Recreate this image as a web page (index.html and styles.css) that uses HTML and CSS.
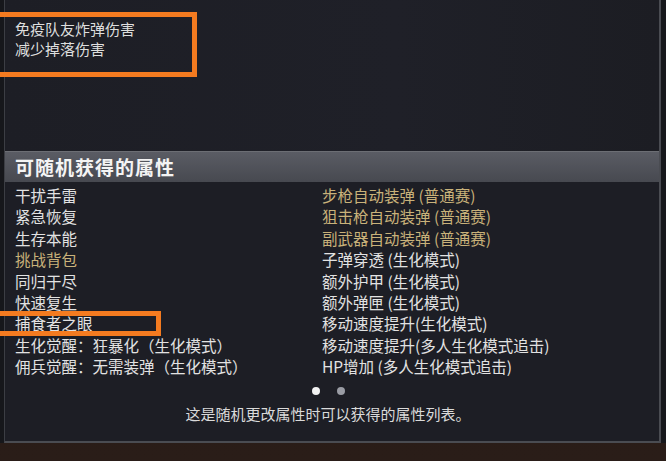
FILE: index.html
```html
<!DOCTYPE html>
<html lang="zh-CN">
<head>
<meta charset="utf-8">
<link rel="stylesheet" href="styles.css">
</head>
<body>
<div class="screen">
  <div class="top">
    <div class="edge-left"></div>
    <div class="panel">
      <div class="intro">
        <div>免疫队友炸弹伤害</div>
        <div>减少掉落伤害</div>
      </div>
      <div class="header">可随机获得的属性</div>
      <div class="list">
        <div class="col">
          <div>干扰手雷</div>
          <div>紧急恢复</div>
          <div>生存本能</div>
          <div class="gold">挑战背包</div>
          <div>同归于尽</div>
          <div>快速复生</div>
          <div>捕食者之眼</div>
          <div>生化觉醒：狂暴化（生化模式）</div>
          <div>佣兵觉醒：无需装弹（生化模式）</div>
        </div>
        <div class="col">
          <div class="gold">步枪自动装弹 (普通赛)</div>
          <div class="gold">狙击枪自动装弹 (普通赛)</div>
          <div class="gold">副武器自动装弹 (普通赛)</div>
          <div>子弹穿透 (生化模式)</div>
          <div>额外护甲 (生化模式)</div>
          <div>额外弹匣 (生化模式)</div>
          <div>移动速度提升(生化模式)</div>
          <div>移动速度提升(多人生化模式追击)</div>
          <div>HP增加 (多人生化模式追击)</div>
        </div>
      </div>
      <div class="dots">
        <span class="dot active"></span>
        <span class="dot"></span>
      </div>
      <div class="caption">这是随机更改属性时可以获得的属性列表。</div>
    </div>
    <div class="edge-right"></div>
  </div>
  <div class="mark mark-top"></div>
  <div class="mark mark-row"></div>
</div>
</body>
</html>
```

FILE: styles.css
```css
* { box-sizing: border-box; }
html, body { margin: 0; padding: 0; }
body {
  background: #241a16;
  font-family: "Noto Sans CJK SC", "Noto Sans", sans-serif;
  color: #dcdcdc;
}
.screen {
  position: relative;
  width: 666px;
  height: 461px;
  overflow: hidden;
  background: linear-gradient(#221a17, #2a1d18);
}
.top {
  display: flex;
  height: 443px;
}
.edge-left {
  width: 4px;
  background: #16171b;
}
.edge-right {
  flex: 1;
  background: #17181c;
}
.panel {
  width: 657px;
  display: flex;
  flex-direction: column;
  background: #1d1e25;
  border-left: 1px solid #3c3e44;
  border-right: 2px solid #4a4c52;
  border-bottom: 2px solid #4a4c52;
}
.intro {
  height: 151px;
  padding: 19px 0 0 10px;
  font-size: 15px;
  line-height: 20px;
  color: #dedede;
  background: linear-gradient(90deg, #1d1e25 0%, #1f2028 60%, #1c1d23 100%);
}
.header {
  height: 31px;
  padding-left: 10px;
  border-top: 1px solid #6c6e74;
  background: linear-gradient(#5a5c64, #474950);
  color: #f4f4f4;
  font-size: 19px;
  font-weight: 700;
  line-height: 30px;
  letter-spacing: 1px;
}
.list {
  display: flex;
  padding: 3px 0 0 10px;
  font-size: 15.5px;
  line-height: 21.4px;
  color: #e2e2e2;
}
.col:first-child { width: 307px; }
.gold { color: #c9b27a; }
.dots {
  display: flex;
  justify-content: center;
  gap: 17px;
  margin-top: 9px;
  padding-right: 8px;
  height: 8px;
}
.dot {
  width: 8px;
  height: 8px;
  border-radius: 50%;
  background: #9a9ca4;
}
.dot.active { background: #f2f2f2; }
.caption {
  margin-top: 9px;
  padding-right: 8px;
  text-align: center;
  font-size: 15px;
  line-height: 20px;
  color: #dadada;
}
.mark {
  position: absolute;
  border: 5px solid #f47b20;
}
.mark-top {
  left: -6px;
  top: 12px;
  width: 203px;
  height: 65px;
}
.mark-row {
  left: -6px;
  top: 311px;
  width: 167px;
  height: 25px;
}
```
